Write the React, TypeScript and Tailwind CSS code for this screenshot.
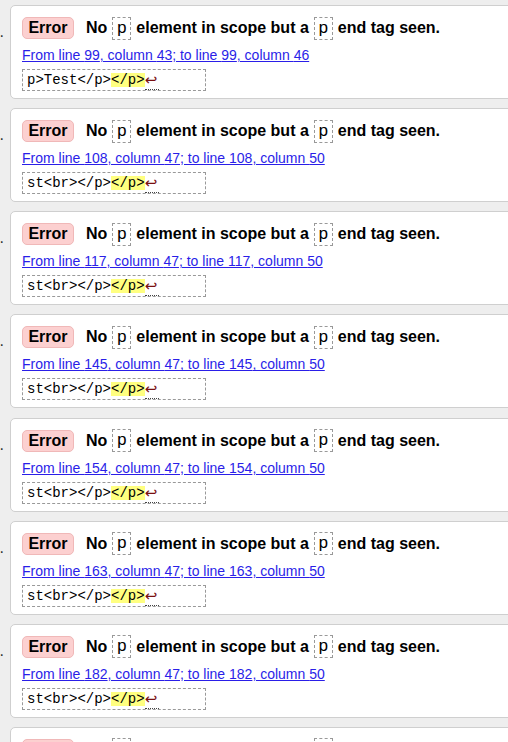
const items = [
  { n: 2, line: 99, from: 43, to: 46, code: 'p>Test</p>' },
  { n: 3, line: 108, from: 47, to: 50, code: 'st<br></p>' },
  { n: 4, line: 117, from: 47, to: 50, code: 'st<br></p>' },
  { n: 5, line: 145, from: 47, to: 50, code: 'st<br></p>' },
  { n: 6, line: 154, from: 47, to: 50, code: 'st<br></p>' },
  { n: 7, line: 163, from: 47, to: 50, code: 'st<br></p>' },
  { n: 8, line: 182, from: 47, to: 50, code: 'st<br></p>' },
  { n: 9, line: 191, from: 47, to: 50, code: 'st<br></p>' },
];

function Tag() {
  return (
    <span className="mx-[5px] inline-flex h-[23px] w-[19px] items-center justify-center border border-dashed border-[#999] font-['Liberation_Mono',monospace] text-[17px] font-normal leading-none text-black">
      p
    </span>
  );
}

function Message({ item }: { item: (typeof items)[number] }) {
  return (
    <div className="flex">
      <div className="flex w-[4px] shrink-0 justify-end pt-[15px] font-['Liberation_Sans',sans-serif] text-[16px] text-[#333]">
        <span className="whitespace-nowrap">{item.n}.</span>
      </div>
      <div className="ml-[6px] h-[94px] w-[520px] shrink-0 rounded-[5px] border border-[#cfcfcf] bg-white pl-[11px] pt-[10px]">
        <div className="flex items-center font-['Liberation_Sans',sans-serif] text-[16px] font-bold text-black">
          <span className="mr-[12px] flex h-[22px] w-[52px] items-center justify-center rounded-[5px] border border-[#f0b8b8] bg-[#fcd0d0]">
            Error
          </span>
          <span>No</span>
          <Tag />
          <span>element in scope but a</span>
          <Tag />
          <span>end tag seen.</span>
        </div>
        <div className="mt-[6px] font-['Liberation_Sans',sans-serif] text-[14px] leading-[18px]">
          <a href="#" className="text-[#2a1ee8] underline">
            From line {item.line}, column {item.from}; to line {item.line}, column {item.to}
          </a>
        </div>
        <div className="mt-[5px] flex h-[22px] w-[184px] items-center border border-dashed border-[#999] pl-[4px] font-['Liberation_Mono',monospace] text-[14px] leading-none text-black">
          <span className="whitespace-pre">{item.code}</span>
          <span className="bg-[#ffff80]">{'</p>'}</span>
          <span className="mt-[3px] flex h-[17px] w-[14px] items-start border-b border-dotted border-[#444] font-['DejaVu_Sans',sans-serif] text-[15px] leading-[14px] text-[#7a1010]">
            {'\u21A9'}
          </span>
        </div>
      </div>
    </div>
  );
}

export default function App() {
  return (
    <div className="h-[742px] w-[508px] overflow-hidden bg-[#eeeeee] pt-[5px]">
      <div className="flex flex-col gap-[9.15px]">
        {items.map((item) => (
          <Message key={item.n} item={item} />
        ))}
      </div>
    </div>
  );
}
